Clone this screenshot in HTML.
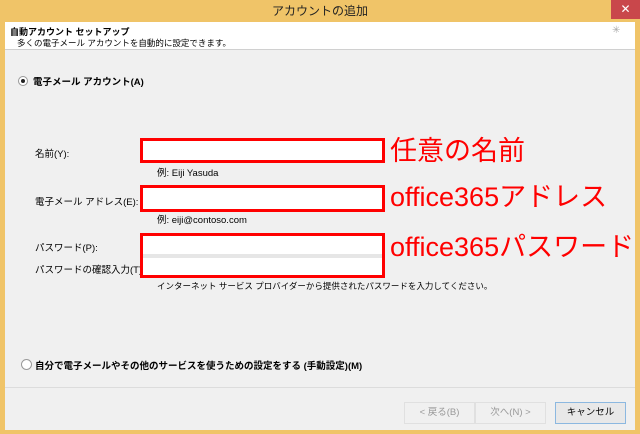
<!DOCTYPE html>
<html><head><meta charset="utf-8"><style>
body{margin:0;width:640px;height:434px;background:#f0c468;position:relative;overflow:hidden;font-family:"Liberation Sans","Noto Sans CJK JP",sans-serif;font-size:9.5px;color:#000}
.a{position:absolute}
</style></head><body>
<div class="a" style="left:0;top:0;width:640px;height:22px;text-align:center;line-height:22px;font-size:12px;color:#222">アカウントの追加</div>
<div class="a" style="left:611px;top:0;width:29px;height:19px;background:#c9474b;color:#fff;text-align:center;line-height:19px;font-size:12px">✕</div>
<div class="a" style="left:5px;top:22px;width:630px;height:408px;background:#f0f0f0"></div>
<div class="a" style="left:5px;top:22px;width:630px;height:27px;background:#fff;border-bottom:1px solid #d0d0d0"></div>
<div class="a" style="left:10px;top:25px;font-weight:bold;font-size:9px">自動アカウント セットアップ</div>
<div class="a" style="left:17px;top:37px;font-size:8.5px">多くの電子メール アカウントを自動的に設定できます。</div>
<div class="a" style="left:612px;top:25px;color:#aaa;font-size:10px">✳</div>
<div class="a" style="left:18px;top:76px;width:8px;height:8px;border:1px solid #999;border-radius:50%;background:#fff"><div class="a" style="left:2px;top:2px;width:4px;height:4px;border-radius:50%;background:#222"></div></div>
<div class="a" style="left:33px;top:74px;font-weight:bold">電子メール アカウント(A)</div>
<div class="a" style="left:35px;top:146px">名前(Y):</div>
<div class="a" style="left:35px;top:194px">電子メール アドレス(E):</div>
<div class="a" style="left:35px;top:240px">パスワード(P):</div>
<div class="a" style="left:35px;top:262px">パスワードの確認入力(T):</div>
<div class="a" style="left:157px;top:165px">例: Eiji Yasuda</div>
<div class="a" style="left:157px;top:212px">例: eiji@contoso.com</div>
<div class="a" style="left:157px;top:280px;font-size:8.5px">インターネット サービス プロバイダーから提供されたパスワードを入力してください。</div>
<div class="a" style="left:140px;top:138px;width:239px;height:19px;border:3px solid #f00;background:#fff"></div>
<div class="a" style="left:140px;top:185px;width:239px;height:21px;border:3px solid #f00;background:#fff"></div>
<div class="a" style="left:140px;top:233px;width:239px;height:39px;border:3px solid #f00;background:#fff"></div>
<div class="a" style="left:143px;top:254px;width:239px;height:4px;background:#e6e6e6"></div>
<div class="a" style="left:390px;top:134px;color:#f00;font-size:27px;line-height:34px">任意の名前</div>
<div class="a" style="left:390px;top:180px;color:#f00;font-size:27px;line-height:34px">office365アドレス</div>
<div class="a" style="left:390px;top:230px;color:#f00;font-size:27px;line-height:34px">office365パスワード</div>
<div class="a" style="left:21px;top:359px;width:9px;height:9px;border:1px solid #999;border-radius:50%;background:#fff"></div>
<div class="a" style="left:35px;top:358px;font-weight:bold">自分で電子メールやその他のサービスを使うための設定をする (手動設定)(M)</div>
<div class="a" style="left:5px;top:387px;width:630px;height:1px;background:#dcdcdc"></div>
<div class="a" style="left:404px;top:402px;width:69px;height:20px;border:1px solid #e0e0e0;color:#999;text-align:center;line-height:20px">&lt; 戻る(B)</div>
<div class="a" style="left:475px;top:402px;width:69px;height:20px;border:1px solid #e0e0e0;color:#999;text-align:center;line-height:20px">次へ(N) &gt;</div>
<div class="a" style="left:555px;top:402px;width:69px;height:20px;border:1px solid #8cb8e0;background:#e8e8e8;text-align:center;line-height:20px">キャンセル</div>
</body></html>
